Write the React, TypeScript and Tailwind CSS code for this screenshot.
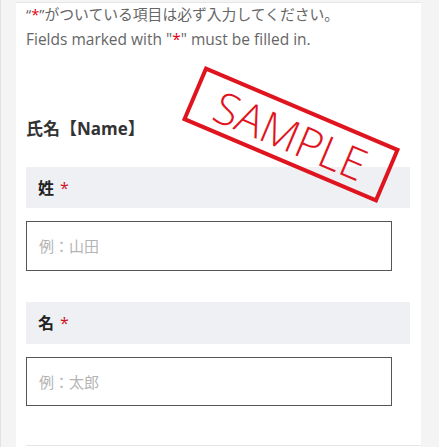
export default function App() {
  return (
    <div
      className="relative flex h-[447px] w-[439px] overflow-hidden bg-[#f4f4f4]"
      style={{ fontFamily: '"Open Sans", "Noto Sans CJK JP", sans-serif' }}
    >
      {/* left rail line */}
      <div className="w-[1px] shrink-0 bg-[#e2e2e2]" />
      <div className="w-[15px] shrink-0" />

      {/* Card */}
      <div className="mt-[2px] flex w-[405px] shrink-0 flex-col border-t border-[#e6e6e6] bg-white pl-[10px]">
        <p className="text-[14.8px] leading-[22px] text-[#666]">
          “<span className="text-[#e60012]">*</span>”がついている項目は必ず入力してください。
        </p>
        <p className="mt-[2px] text-[15.5px] leading-[24px] text-[#666]">
          Fields marked with "<span className="text-[#e60012]">*</span>" must be filled in.
        </p>

        <h3 className="mt-[66px] text-[17px] font-bold leading-[24px] text-[#333]">氏名【Name】</h3>

        {/* Last name */}
        <div className="mt-[26px] flex h-[41px] w-[384px] items-center bg-[#eef0f4] pl-[12px]">
          <span className="text-[16px] font-bold text-[#222]">姓</span>
          <span className="ml-[6px] text-[16px] text-[#d0101b]">*</span>
        </div>
        <input
          type="text"
          placeholder="例：山田"
          className="mt-[13px] h-[50px] w-[366px] border-[1.5px] border-[#555] px-[12px] text-[15px] placeholder:text-[#b4b4b4] focus:outline-none"
        />

        {/* First name */}
        <div className="mt-[31px] flex h-[42px] w-[384px] items-center bg-[#eef0f4] pl-[12px]">
          <span className="text-[16px] font-bold text-[#222]">名</span>
          <span className="ml-[6px] text-[16px] text-[#d0101b]">*</span>
        </div>
        <input
          type="text"
          placeholder="例：太郎"
          className="mt-[13px] h-[49px] w-[366px] border-[1.5px] border-[#555] px-[12px] text-[15px] placeholder:text-[#b4b4b4] focus:outline-none"
        />

        <div className="mb-[1px] mt-auto h-[1px] bg-[#e6e6e6]" />
      </div>

      {/* SAMPLE stamp */}
      <div className="pointer-events-none absolute left-[185px] top-[105px] flex h-[59px] w-[212px] rotate-[23deg] items-center justify-center border-[4px] border-[#e0141e]">
        <span
          className="text-[44px] font-light leading-none text-[#e0141e]"
          style={{ fontFamily: '"Open Sans", sans-serif' }}
        >
          SAMPLE
        </span>
      </div>
    </div>
  );
}
